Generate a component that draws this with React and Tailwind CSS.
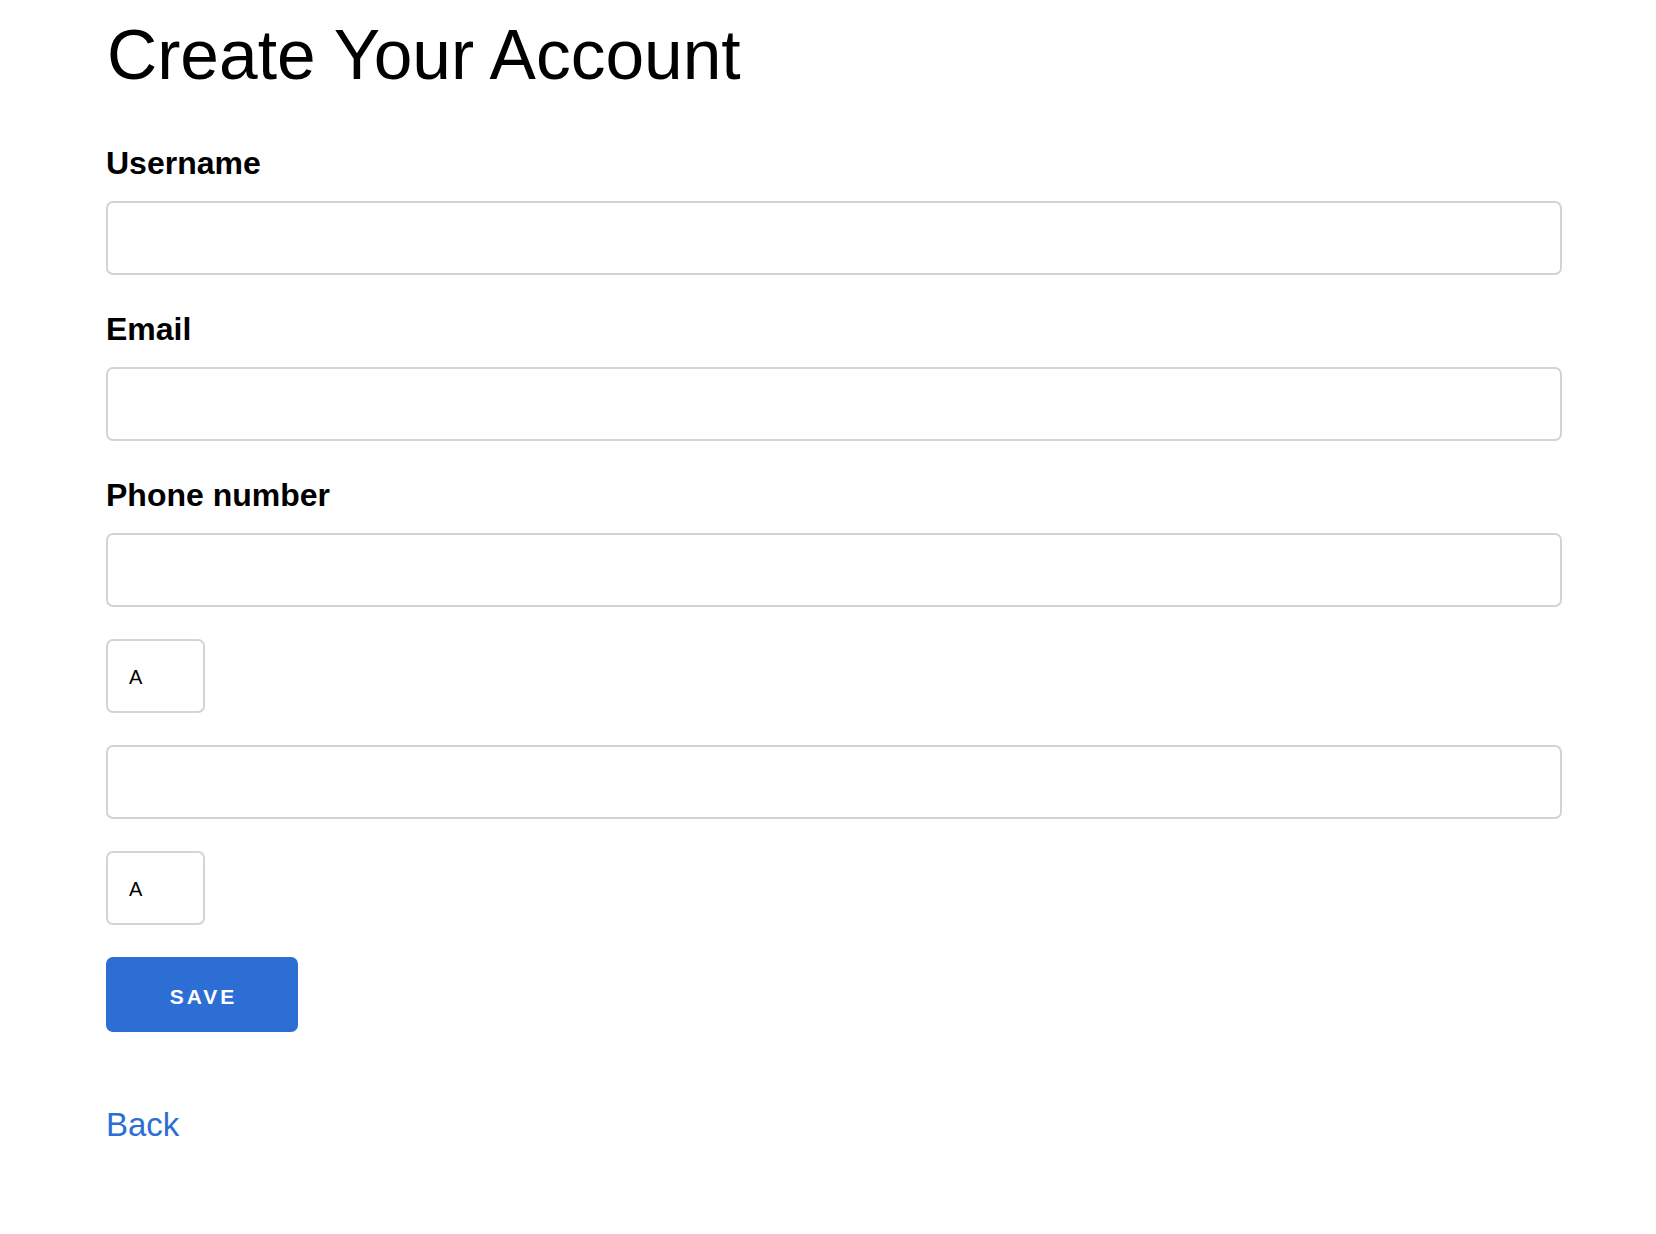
import React from "react";

const Field = ({ label }) => (
  <div className="flex flex-col">
    <label className="text-[32px] leading-none font-bold text-black mb-[22px]">{label}</label>
    <input type="text" className="h-[74px] w-full border-2 border-[#d4d4d4] rounded-[7px] bg-white outline-none px-5 text-[20px]" />
  </div>
);

const LetterBox = () => (
  <div className="h-[74px] w-[99px] border-2 border-[#d4d4d4] rounded-[7px] bg-white flex items-center pl-[21px] pt-[2px] text-[20px] leading-none text-black">
    A
  </div>
);

export default function App() {
  return (
    <div className="min-h-screen bg-white font-['Liberation_Sans',Arial,sans-serif]">
      <div className="pl-[106px] w-[1562px] pt-[21px] pb-[80px]">
        <h1 className="text-[69.5px] leading-none font-normal text-black ml-[1px]">Create Your Account</h1>

        <div className="flex flex-col gap-[38px] mt-[56px]">
          <Field label="Username" />
          <Field label="Email" />
          <Field label="Phone number" />
        </div>

        <div className="flex flex-col gap-[32px] mt-[32.5px]">
          <LetterBox />
          <input type="text" className="h-[74px] w-full border-2 border-[#d4d4d4] rounded-[7px] bg-white outline-none px-5 text-[20px]" />
          <LetterBox />
          <button className="h-[75px] w-[192px] rounded-[7px] bg-[#2d6ed5] text-white text-[21px] font-bold tracking-[3px] pl-[3px] pt-[5px]">
            SAVE
          </button>
        </div>

        <div className="mt-[76px]">
          <a href="#" className="text-[33px] leading-none text-[#2d6ed5]">Back</a>
        </div>
      </div>
    </div>
  );
}
